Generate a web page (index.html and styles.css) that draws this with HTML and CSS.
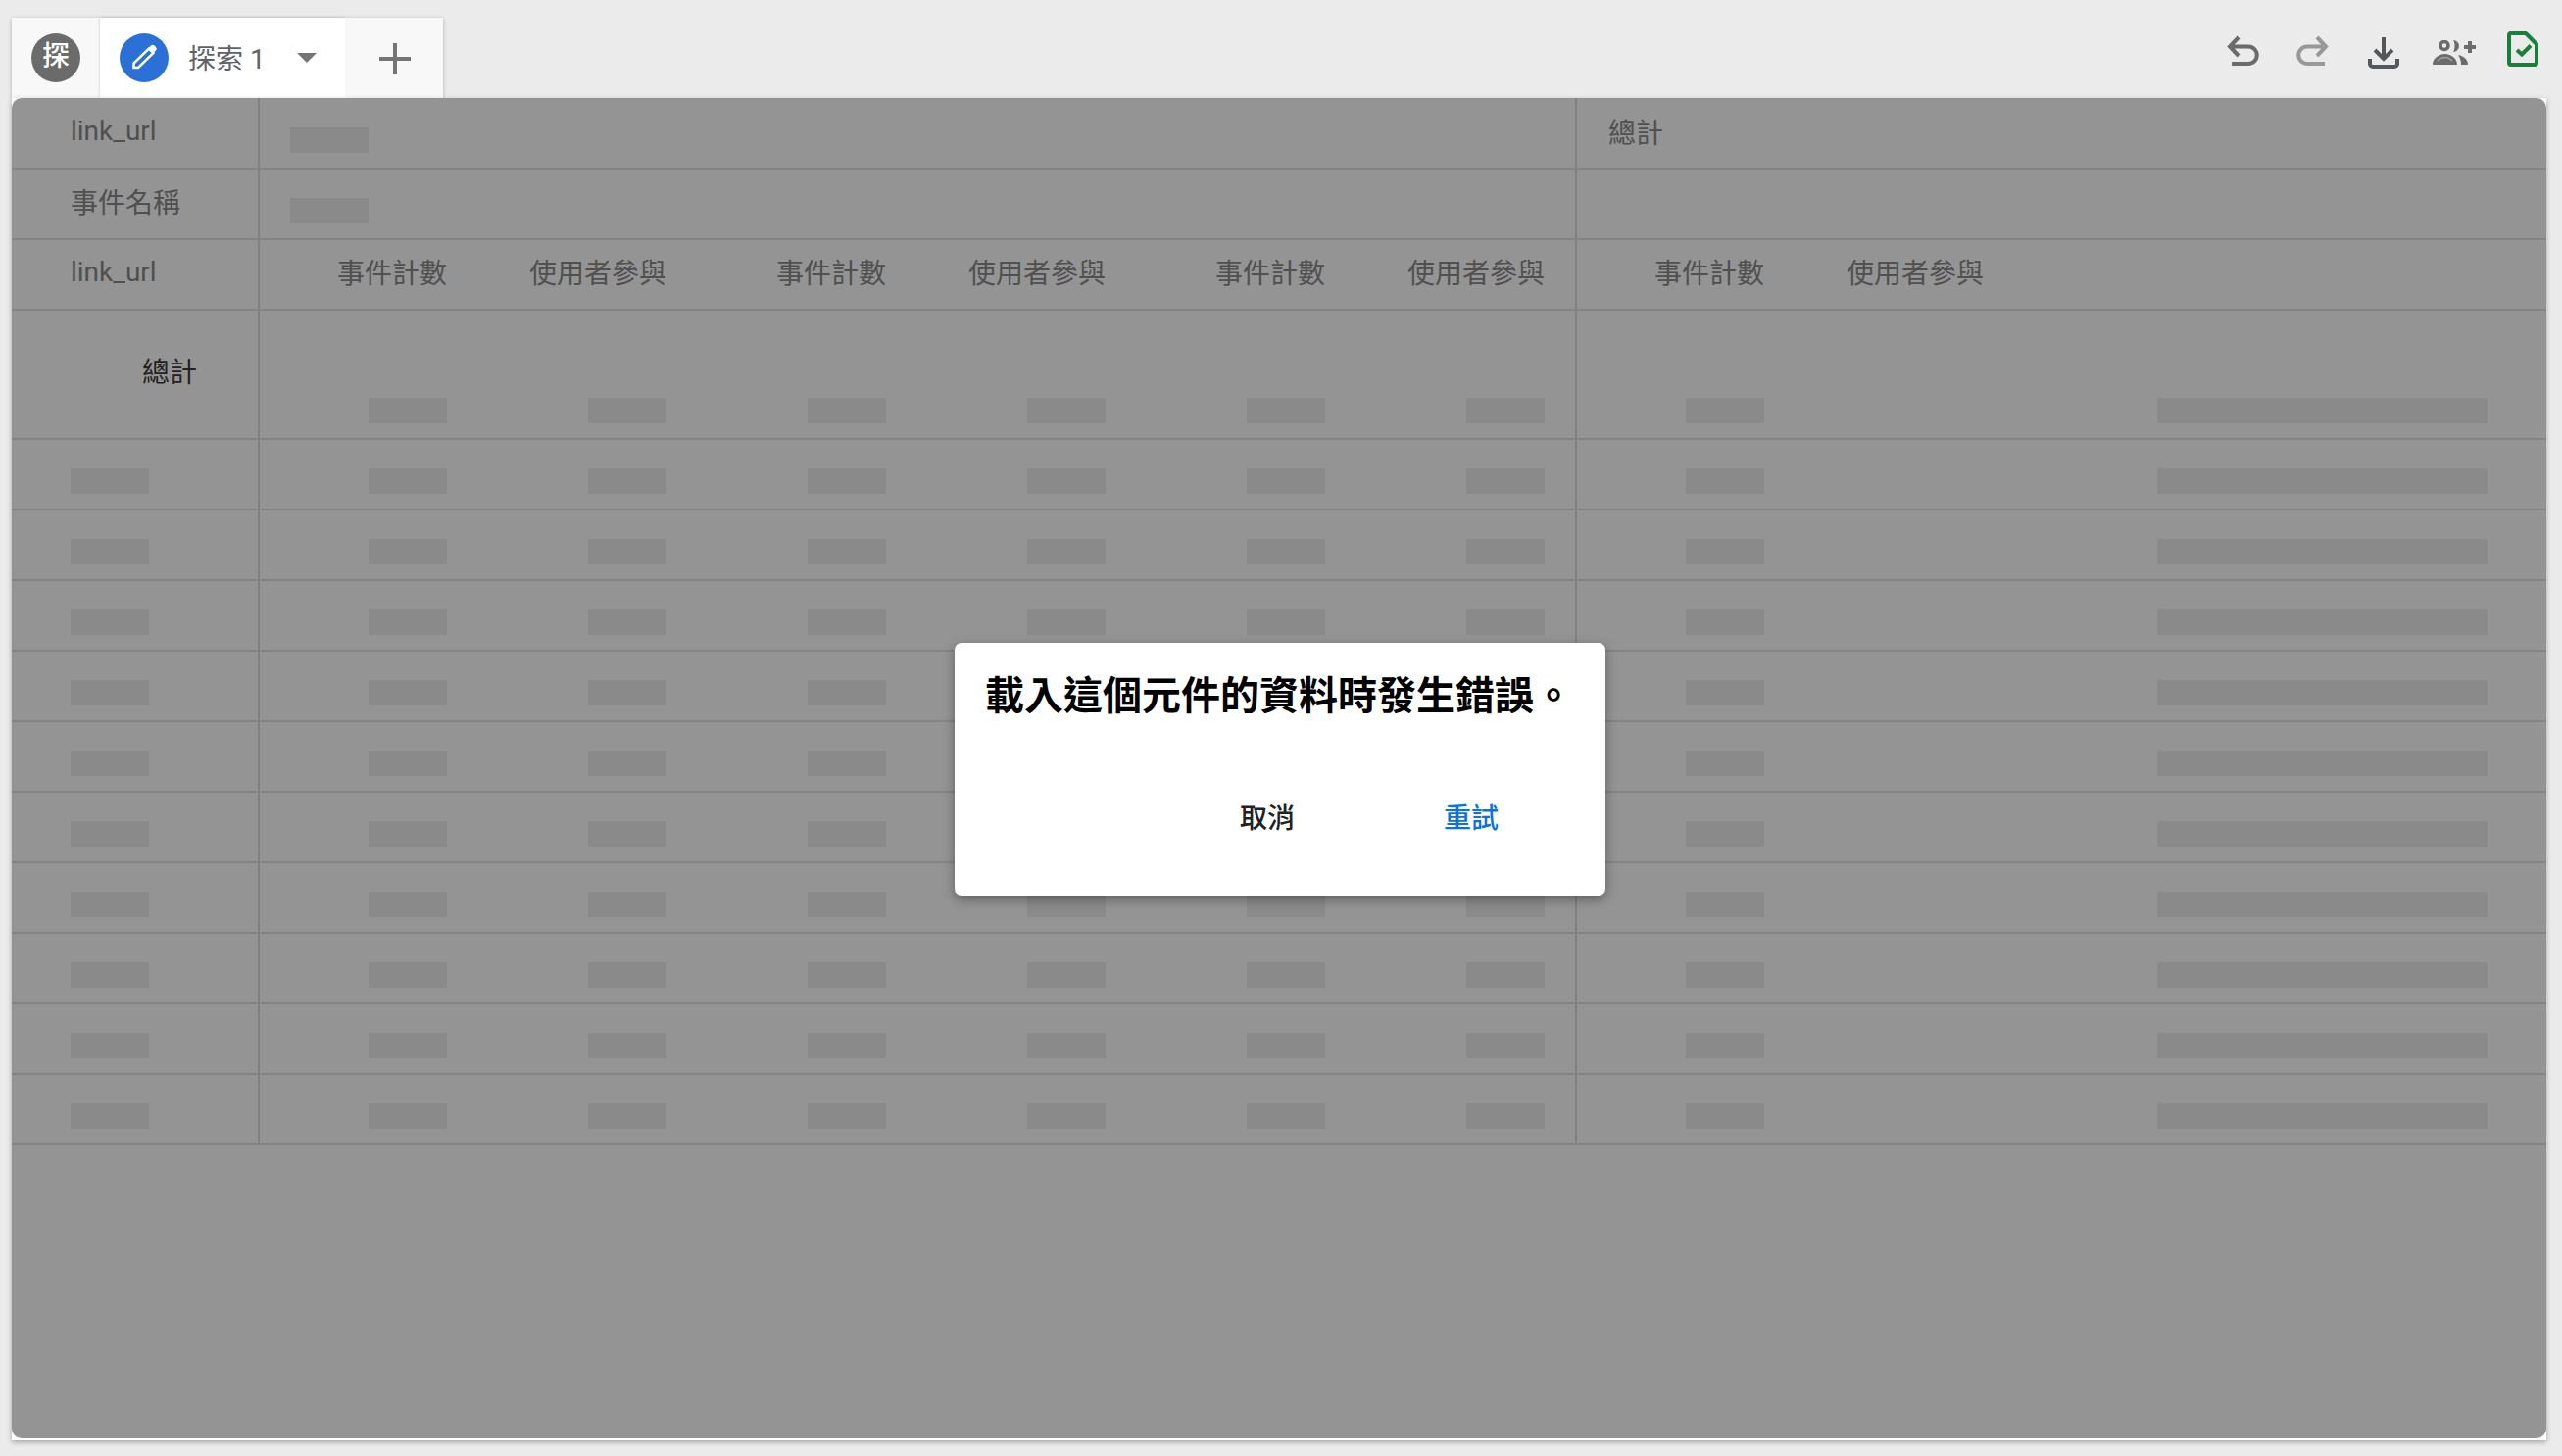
FILE: index.html
```html
<!DOCTYPE html>
<html lang="zh-Hant">
<head>
    <meta charset="UTF-8">
    <title>探索 1</title>
    <link rel="stylesheet" href="styles.css">
</head>
<body>
    <!-- Top bar -->
    <header class="topbar">
        <div class="tabs">
            <div class="tab tab-info"><span class="tab-badge">探</span></div>
            <div class="tab tab-active">
                <span class="tab-edit">
                    <svg width="50" height="50" viewBox="0 0 50 50"><path d="M14.500 35v-4.500L30 15.500l4.500 4.500L19 35z" fill="none" stroke="#fff" stroke-width="2.500"/><path d="M29.500 15l2.500-2.500a2.500 2.500 0 0 1 3.500 0l1.500 1.500a2.500 2.500 0 0 1 0 3.500L34.500 20z" fill="#fff"/></svg>
                </span>
                <span class="tab-name">探索 1</span>
                <span class="tab-caret"></span>
            </div>
            <div class="tab tab-add">
                <svg width="32" height="32" viewBox="0 0 32 32"><path d="M16 0v32M0 16h32" stroke="#757575" stroke-width="4"/></svg>
            </div>
        </div>
        <div class="tools">
            <!-- undo -->
            <svg class="tool tool-undo" width="34" height="32" viewBox="0 0 34 32"><path d="M13 2L4 11.500l9 9.500M4 11.500h19a8.700 8.700 0 0 1 0 17.500H6" fill="none" stroke="#6b6b6b" stroke-width="4"/></svg>
            <!-- redo -->
            <svg class="tool tool-redo" width="34" height="32" viewBox="0 0 34 32"><path d="M21 2l9 9.500-9 9.500M30 11.500H11a8.700 8.700 0 0 0 0 17.500h18" fill="none" stroke="#989898" stroke-width="4"/></svg>
            <!-- download -->
            <svg class="tool tool-down" width="32" height="32" viewBox="0 0 32 32"><path d="M16 0v21M7 13l9 9 9-9M2 22v5a3 3 0 0 0 3 3h22a3 3 0 0 0 3-3v-5" fill="none" stroke="#54575c" stroke-width="4"/></svg>
            <!-- add people -->
            <svg class="tool tool-people" width="46" height="26" viewBox="0 0 46 26"><circle cx="12" cy="5.500" r="4" fill="none" stroke="#6b6b6b" stroke-width="3.500"/><path d="M0 25c0-7 7-11 12.500-11S25 18 25 25z M21 0a6 6 0 0 1 0 12c2-3 2-9 0-12z M26 15c5 1 10 4 10 10h-7c0-4-1-7-3-10z" fill="#6b6b6b"/><path d="M5 21c2-2 5-3.500 7.500-3.500S18 19 20 21" fill="none" stroke="#a0a0a0" stroke-width="1.500"/><path d="M38 1v12M32 7h12" stroke="#6b6b6b" stroke-width="4"/></svg>
            <!-- saved -->
            <svg class="tool tool-file" width="32" height="36" viewBox="0 0 32 36"><path d="M4 2h15l11 11v19a2 2 0 0 1-2 2H4a2 2 0 0 1-2-2V4a2 2 0 0 1 2-2z" fill="none" stroke="#188038" stroke-width="4" stroke-linejoin="round"/><path d="M10 19l5 4.500 9-9" fill="none" stroke="#188038" stroke-width="4"/></svg>
        </div>
    </header>

    <!-- Pivot table with error dialog -->
    <main class="panel">
        <div class="pivot">
            <div class="row row-head row-first">
                <div class="cell cell-label">link_url</div>
                <div class="cell cell-group"><span class="bar"></span></div>
                <div class="cell cell-total">總計</div>
            </div>
            <div class="row row-head">
                <div class="cell cell-label">事件名稱</div>
                <div class="cell cell-group"><span class="bar"></span></div>
                <div class="cell cell-total"></div>
            </div>
            <div class="row row-cols">
                <div class="cell cell-label">link_url</div>
                <div class="cell cell-num">事件計數</div>
                <div class="cell cell-num">使用者參與</div>
                <div class="cell cell-num">事件計數</div>
                <div class="cell cell-num">使用者參與</div>
                <div class="cell cell-num">事件計數</div>
                <div class="cell cell-num cell-end">使用者參與</div>
                <div class="cell cell-num">事件計數</div>
                <div class="cell cell-left">使用者參與</div>
            </div>
            <div class="row row-sum">
                <div class="cell cell-sum">總計</div>
                <div class="cell cell-num"><span class="bar"></span></div>
                <div class="cell cell-num"><span class="bar"></span></div>
                <div class="cell cell-num"><span class="bar"></span></div>
                <div class="cell cell-num"><span class="bar"></span></div>
                <div class="cell cell-num"><span class="bar"></span></div>
                <div class="cell cell-num cell-end"><span class="bar"></span></div>
                <div class="cell cell-num"><span class="bar"></span></div>
                <div class="cell cell-wide"><span class="bar bar-wide"></span></div>
            </div>
            <div class="row row-data">
                <div class="cell cell-label"><span class="bar"></span></div>
                <div class="cell cell-num"><span class="bar"></span></div>
                <div class="cell cell-num"><span class="bar"></span></div>
                <div class="cell cell-num"><span class="bar"></span></div>
                <div class="cell cell-num"><span class="bar"></span></div>
                <div class="cell cell-num"><span class="bar"></span></div>
                <div class="cell cell-num cell-end"><span class="bar"></span></div>
                <div class="cell cell-num"><span class="bar"></span></div>
                <div class="cell cell-wide"><span class="bar bar-wide"></span></div>
            </div>
            <div class="row row-data">
                <div class="cell cell-label"><span class="bar"></span></div>
                <div class="cell cell-num"><span class="bar"></span></div>
                <div class="cell cell-num"><span class="bar"></span></div>
                <div class="cell cell-num"><span class="bar"></span></div>
                <div class="cell cell-num"><span class="bar"></span></div>
                <div class="cell cell-num"><span class="bar"></span></div>
                <div class="cell cell-num cell-end"><span class="bar"></span></div>
                <div class="cell cell-num"><span class="bar"></span></div>
                <div class="cell cell-wide"><span class="bar bar-wide"></span></div>
            </div>
            <div class="row row-data">
                <div class="cell cell-label"><span class="bar"></span></div>
                <div class="cell cell-num"><span class="bar"></span></div>
                <div class="cell cell-num"><span class="bar"></span></div>
                <div class="cell cell-num"><span class="bar"></span></div>
                <div class="cell cell-num"><span class="bar"></span></div>
                <div class="cell cell-num"><span class="bar"></span></div>
                <div class="cell cell-num cell-end"><span class="bar"></span></div>
                <div class="cell cell-num"><span class="bar"></span></div>
                <div class="cell cell-wide"><span class="bar bar-wide"></span></div>
            </div>
            <div class="row row-data">
                <div class="cell cell-label"><span class="bar"></span></div>
                <div class="cell cell-num"><span class="bar"></span></div>
                <div class="cell cell-num"><span class="bar"></span></div>
                <div class="cell cell-num"><span class="bar"></span></div>
                <div class="cell cell-num"><span class="bar"></span></div>
                <div class="cell cell-num"><span class="bar"></span></div>
                <div class="cell cell-num cell-end"><span class="bar"></span></div>
                <div class="cell cell-num"><span class="bar"></span></div>
                <div class="cell cell-wide"><span class="bar bar-wide"></span></div>
            </div>
            <div class="row row-data">
                <div class="cell cell-label"><span class="bar"></span></div>
                <div class="cell cell-num"><span class="bar"></span></div>
                <div class="cell cell-num"><span class="bar"></span></div>
                <div class="cell cell-num"><span class="bar"></span></div>
                <div class="cell cell-num"><span class="bar"></span></div>
                <div class="cell cell-num"><span class="bar"></span></div>
                <div class="cell cell-num cell-end"><span class="bar"></span></div>
                <div class="cell cell-num"><span class="bar"></span></div>
                <div class="cell cell-wide"><span class="bar bar-wide"></span></div>
            </div>
            <div class="row row-data">
                <div class="cell cell-label"><span class="bar"></span></div>
                <div class="cell cell-num"><span class="bar"></span></div>
                <div class="cell cell-num"><span class="bar"></span></div>
                <div class="cell cell-num"><span class="bar"></span></div>
                <div class="cell cell-num"><span class="bar"></span></div>
                <div class="cell cell-num"><span class="bar"></span></div>
                <div class="cell cell-num cell-end"><span class="bar"></span></div>
                <div class="cell cell-num"><span class="bar"></span></div>
                <div class="cell cell-wide"><span class="bar bar-wide"></span></div>
            </div>
            <div class="row row-data">
                <div class="cell cell-label"><span class="bar"></span></div>
                <div class="cell cell-num"><span class="bar"></span></div>
                <div class="cell cell-num"><span class="bar"></span></div>
                <div class="cell cell-num"><span class="bar"></span></div>
                <div class="cell cell-num"><span class="bar"></span></div>
                <div class="cell cell-num"><span class="bar"></span></div>
                <div class="cell cell-num cell-end"><span class="bar"></span></div>
                <div class="cell cell-num"><span class="bar"></span></div>
                <div class="cell cell-wide"><span class="bar bar-wide"></span></div>
            </div>
            <div class="row row-data">
                <div class="cell cell-label"><span class="bar"></span></div>
                <div class="cell cell-num"><span class="bar"></span></div>
                <div class="cell cell-num"><span class="bar"></span></div>
                <div class="cell cell-num"><span class="bar"></span></div>
                <div class="cell cell-num"><span class="bar"></span></div>
                <div class="cell cell-num"><span class="bar"></span></div>
                <div class="cell cell-num cell-end"><span class="bar"></span></div>
                <div class="cell cell-num"><span class="bar"></span></div>
                <div class="cell cell-wide"><span class="bar bar-wide"></span></div>
            </div>
            <div class="row row-data">
                <div class="cell cell-label"><span class="bar"></span></div>
                <div class="cell cell-num"><span class="bar"></span></div>
                <div class="cell cell-num"><span class="bar"></span></div>
                <div class="cell cell-num"><span class="bar"></span></div>
                <div class="cell cell-num"><span class="bar"></span></div>
                <div class="cell cell-num"><span class="bar"></span></div>
                <div class="cell cell-num cell-end"><span class="bar"></span></div>
                <div class="cell cell-num"><span class="bar"></span></div>
                <div class="cell cell-wide"><span class="bar bar-wide"></span></div>
            </div>
            <div class="row row-data">
                <div class="cell cell-label"><span class="bar"></span></div>
                <div class="cell cell-num"><span class="bar"></span></div>
                <div class="cell cell-num"><span class="bar"></span></div>
                <div class="cell cell-num"><span class="bar"></span></div>
                <div class="cell cell-num"><span class="bar"></span></div>
                <div class="cell cell-num"><span class="bar"></span></div>
                <div class="cell cell-num cell-end"><span class="bar"></span></div>
                <div class="cell cell-num"><span class="bar"></span></div>
                <div class="cell cell-wide"><span class="bar bar-wide"></span></div>
            </div>
        </div>

        <div class="overlay">
            <div class="dialog">
                <div class="dialog-title">載入這個元件的資料時發生錯誤。</div>
                <div class="dialog-actions">
                    <button class="btn">取消</button>
                    <button class="btn btn-primary">重試</button>
                </div>
            </div>
        </div>
    </main>
</body>
</html>
```

FILE: styles.css
```css
* {
    box-sizing: border-box;
}
html, body {
    height: 100%;
}
body {
    margin: 0;
    background-color: #ebebeb;
    font-family: Roboto, "Noto Sans CJK TC", sans-serif;
    font-size: 28px;
    overflow: hidden;
}

/* Top bar */
.topbar {
    height: 100px;
    padding: 18px 0 0 12px;
    display: flex;
    justify-content: space-between;
}
.tabs {
    display: flex;
    height: 82px;
    box-shadow: 0 1px 4px rgba(0, 0, 0, 0.25);
}
.tab {
    display: flex;
    align-items: center;
    height: 100%;
}
.tab-info {
    width: 90px;
    background: #f8f8f8;
    padding-left: 20px;
}
.tab-badge {
    width: 50px;
    height: 50px;
    border-radius: 50%;
    background: #6b6b6b;
    color: #fff;
    font-weight: 500;
    text-align: center;
    line-height: 48px;
}
.tab-active {
    width: 250px;
    background: #fff;
    padding-left: 20px;
    box-shadow: 0 0 3px rgba(0, 0, 0, 0.2);
}
.tab-edit {
    width: 50px;
    height: 50px;
    border-radius: 50%;
    background: #2b70d6;
}
.tab-edit svg {
    display: block;
}
.tab-name {
    margin-left: 20px;
    padding-bottom: 2px;
    color: #5f6368;
}
.tab-caret {
    margin-left: 32px;
    border-top: 10px solid #757575;
    border-left: 10px solid transparent;
    border-right: 10px solid transparent;
}
.tab-add {
    width: 100px;
    background: #f8f8f8;
    justify-content: center;
    padding: 2px 0 0 2px;
}
.tools {
    display: flex;
    align-items: flex-start;
    padding: 14px 24px 0 0;
}
.tool {
    display: block;
}
.tool-undo {
    margin-top: 4px;
}
.tool-redo {
    margin: 4px 0 0 38px;
}
.tool-down {
    margin: 6px 0 0 39px;
}
.tool-people {
    margin: 9px 0 0 34px;
}
.tool-file {
    margin-left: 30px;
}

/* Panel */
.panel {
    position: relative;
    margin: 0 16px 0 12px;
    height: 1370px;
    background: #fff;
    box-shadow: 0 2px 5px rgba(0, 0, 0, 0.3);
}

/* Table */
.row {
    display: grid;
    grid-template-columns: 253px 223px 224px 224px 224px 224px 225px 223px 1fr;
    height: 72px;
    border-bottom: 2px solid #e4e4e4;
}
.row-head {
    grid-template-columns: 253px 1344px 1fr;
}
.row-first {
    height: 73px;
}
.row-sum {
    height: 132px;
}
.cell {
    display: flex;
    align-items: flex-end;
    color: #8a8a8a;
    padding-bottom: 15px;
}
.cell-label,
.cell-group,
.cell-sum,
.cell-end {
    border-right: 2px solid #dcdcdc;
}
.row-head .cell,
.row-cols .cell {
    align-items: center;
    padding-bottom: 6px;
}
.row-first .cell {
    padding-bottom: 4px;
}
.cell-label {
    padding-left: 60px;
}
.row-head .cell-group {
    align-items: flex-end;
    padding: 0 0 15px 31px;
}
.cell-total {
    padding-left: 32px;
}
.cell-num {
    justify-content: flex-end;
    padding-right: 32px;
}
.cell-end {
    padding-right: 31px;
}
.cell-left {
    padding-left: 52px;
}
.cell-wide {
    justify-content: flex-end;
    padding-right: 60px;
}
.cell-sum {
    justify-content: flex-end;
    align-items: center;
    padding: 0 62px 8px 0;
    color: #3c3c3c;
}
.bar {
    display: block;
    width: 80px;
    height: 26px;
    background: #eeeeee;
}
.bar-wide {
    width: 337px;
}

/* Overlay and dialog */
.overlay {
    position: absolute;
    left: 0;
    top: 0;
    right: 0;
    bottom: 2px;
    background: rgba(0, 0, 0, 0.42);
    border-radius: 10px;
}
.dialog {
    position: absolute;
    left: 962px;
    top: 556px;
    width: 664px;
    height: 258px;
    background: #fff;
    border-radius: 7px;
    box-shadow: 0 4px 12px rgba(0, 0, 0, 0.35);
    padding: 27px 31px;
}
.dialog-title {
    font-size: 40px;
    font-weight: 700;
    line-height: 56px;
    color: #000;
    white-space: nowrap;
}
.dialog-actions {
    display: flex;
    justify-content: flex-end;
    gap: 152px;
    margin-top: 74px;
    padding-right: 78px;
}
.btn {
    border: none;
    background: none;
    padding: 0;
    font-family: inherit;
    font-size: 28px;
    font-weight: 500;
    color: #202124;
}
.btn-primary {
    color: #0b72e0;
}
```
